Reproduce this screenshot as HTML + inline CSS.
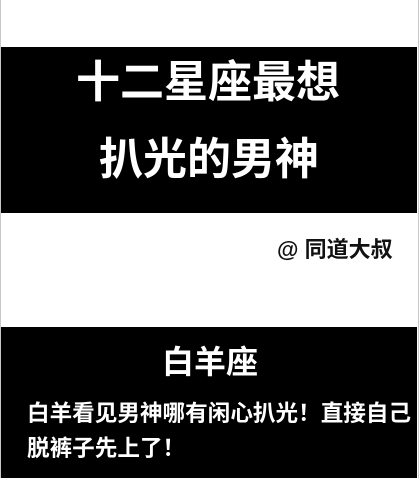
<!DOCTYPE html>
<html><head><meta charset="utf-8"><style>
html,body{margin:0;padding:0;width:419px;height:478px;overflow:hidden;background:#fff;}
body{position:relative;font-family:"Liberation Sans","Noto Sans CJK SC",sans-serif;font-weight:bold;}
.edge{position:absolute;top:0;bottom:0;width:1px;background:#c8c8c8;}
.band{position:absolute;left:1px;width:416px;background:#000;color:#fff;}
.t{position:absolute;white-space:nowrap;line-height:1;}
</style></head><body>
<div class="edge" style="left:0"></div><div class="edge" style="left:418px"></div>
<div class="band" style="top:47px;height:166px;"></div>
<div class="t" style="left:76px;top:61px;font-size:44px;color:#fff;">十二星座最想</div>
<div class="t" style="left:99px;top:138px;font-size:44px;color:#fff;">扒光的男神</div>
<div class="t" style="left:277px;top:239px;font-size:22px;color:#111;">@ 同道大叔</div>
<div class="band" style="top:327px;height:151px;"></div>
<div class="t" style="left:162px;top:346px;font-size:32px;color:#fff;">白羊座</div>
<div class="t" style="left:27px;top:403px;font-size:22.6px;color:#fff;">白羊看见男神哪有闲心扒光！直接自己</div>
<div class="t" style="left:27px;top:438px;font-size:22.6px;color:#fff;">脱裤子先上了！</div>
</body></html>
